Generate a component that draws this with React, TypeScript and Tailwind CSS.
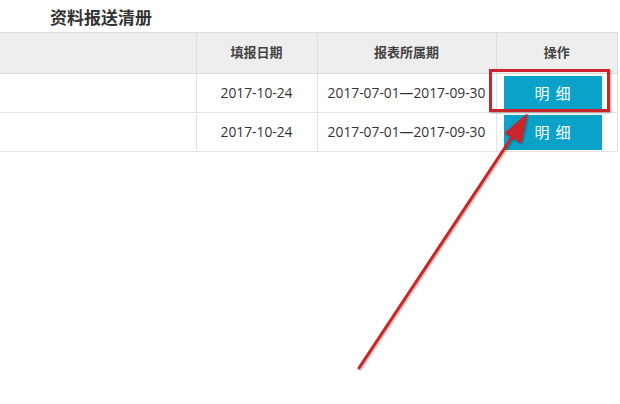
const rows = [
  { date: '2017-10-24', period: '2017-07-01—2017-09-30' },
  { date: '2017-10-24', period: '2017-07-01—2017-09-30' },
];

export default function App() {
  return (
    <div
      className="relative w-[620px] h-[404px] bg-white overflow-hidden"
      style={{ fontFamily: '"Open Sans", "Noto Sans CJK SC", sans-serif' }}
    >
      {/* title */}
      <h2 className="pl-[50px] pt-[6px] h-[32px] text-[17px] font-bold text-[#333] leading-[24px]">
        资料报送清册
      </h2>

      {/* table */}
      <table className="w-[618px] border-collapse text-[13.8px] text-[#333]">
        <thead>
          <tr className="h-[41px] bg-[#eeeeee] text-[#444] text-[13px]">
            <th className="w-[196px] border border-l-0 border-[#dddddd]"></th>
            <th className="w-[121px] border border-[#dddddd] font-bold">填报日期</th>
            <th className="w-[179px] border border-[#dddddd] font-bold">报表所属期</th>
            <th className="border border-[#dddddd] font-bold">操作</th>
          </tr>
        </thead>
        <tbody>
          {rows.map((r, i) => (
            <tr key={i} className="h-[39px]">
              <td className="border border-l-0 border-[#e2e2e2]"></td>
              <td className="border border-[#e2e2e2] text-center">{r.date}</td>
              <td className="border border-[#e2e2e2] text-center whitespace-nowrap">{r.period}</td>
              <td className="border border-[#e2e2e2] px-[7px]">
                <div className="relative">
                  <button className="w-[98px] h-[35px] mt-[1px] bg-[#0ba2c9] text-white text-[15px] flex items-center justify-center gap-[6px]">
                    <span>明</span>
                    <span>细</span>
                  </button>
                  {i === 0 && (
                    <div className="absolute -left-[15px] -top-[7px] w-[121px] h-[43px] border-[3px] border-[#c9252b] shadow-[1px_1px_2px_rgba(0,0,0,0.35)]"></div>
                  )}
                </div>
              </td>
            </tr>
          ))}
        </tbody>
      </table>

      {/* arrow annotation */}
      <svg className="absolute left-0 top-0" width="620" height="404">
        <defs>
          <filter id="sh" x="-20%" y="-20%" width="140%" height="140%">
            <feDropShadow dx="1" dy="1" stdDeviation="1" floodColor="#000" floodOpacity="0.35" />
          </filter>
        </defs>
        <g filter="url(#sh)" fill="#c9252b" stroke="#c9252b">
          <line x1="359" y1="368" x2="514" y2="134" strokeWidth="3" strokeLinecap="round" />
          <polygon points="527,114 521,143 505,133" strokeWidth="1" />
        </g>
      </svg>
    </div>
  );
}
